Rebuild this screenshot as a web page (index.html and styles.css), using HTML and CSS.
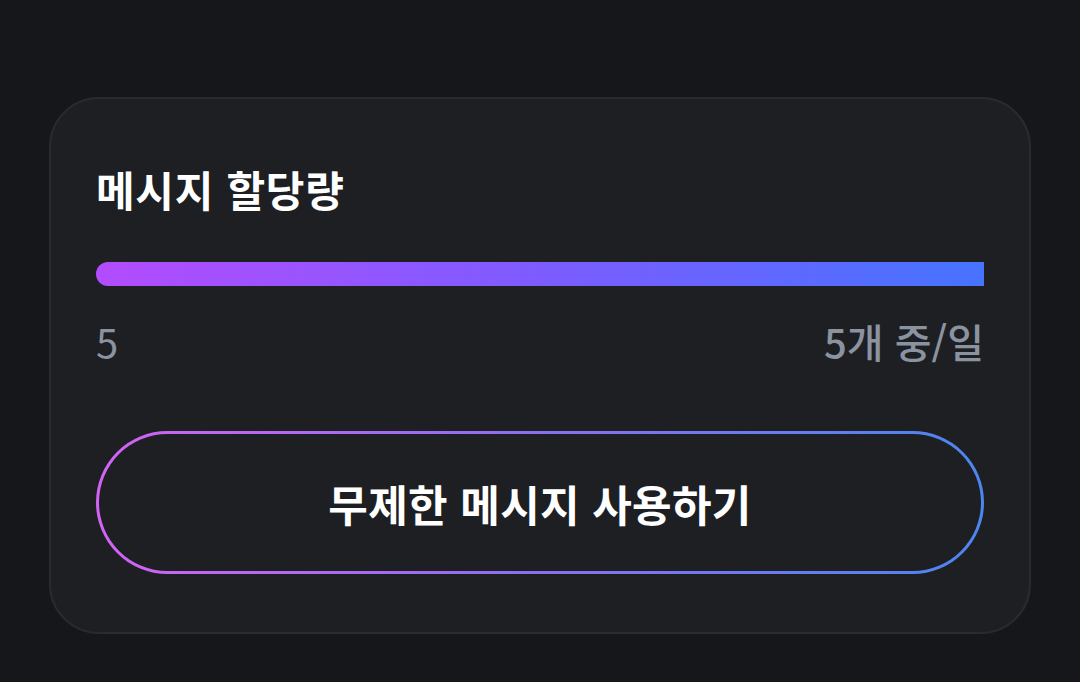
FILE: index.html
```html
<!DOCTYPE html>
<html lang="ko">
<head>
<meta charset="utf-8">
<link rel="stylesheet" href="styles.css">
</head>
<body>
<div class="page">
  <section class="card">
    <h2 class="title">메시지 할당량</h2>
    <div class="track"><div class="fill" style="width:100%"></div></div>
    <div class="labels">
      <span class="used">5</span>
      <span class="limit">5개 중/일</span>
    </div>
    <button class="cta"><span class="cta-inner">무제한 메시지 사용하기</span></button>
  </section>
</div>
</body>
</html>
```
FILE: styles.css
```css
html, body {
  margin: 0;
  padding: 0;
  background: #16171a;
  width: 1080px;
  height: 682px;
  overflow: hidden;
  font-family: "Noto Sans CJK KR", "Noto Sans", sans-serif;
}
.page {
  padding: 97px 49px 0 49px;
}
.card {
  box-sizing: border-box;
  width: 982px;
  height: 537px;
  background: #1e1f23;
  border: 2px solid #2a2b30;
  border-radius: 50px;
  padding: 60px 45px 0 45px;
  display: flex;
  flex-direction: column;
}
.title {
  margin: 0;
  color: #ffffff;
  font-size: 42px;
  font-weight: 700;
  line-height: 60px;
  letter-spacing: 0.7px;
}
.track {
  margin-top: 43px;
  height: 24px;
  border-radius: 12px 0 0 12px;
  overflow: hidden;
}
.fill {
  height: 100%;
  background: linear-gradient(90deg, #b34cff 0%, #7d5cff 50%, #4673ff 100%);
}
.labels {
  margin-top: 30px;
  display: flex;
  justify-content: space-between;
  color: #8b93a0;
  font-size: 40px;
  line-height: 50px;
}
.limit {
  font-weight: 500;
}
.cta {
  margin-top: 65px;
  height: 143px;
  padding: 3px;
  border: 0;
  border-radius: 72px;
  background: linear-gradient(90deg, #d363f6 0%, #8a6ff0 50%, #4c86f0 100%);
  font-family: inherit;
  cursor: pointer;
}
.cta-inner {
  box-sizing: border-box;
  display: flex;
  align-items: center;
  justify-content: center;
  height: 100%;
  border-radius: 70px;
  background: #1e1f23;
  color: #ffffff;
  font-size: 43px;
  font-weight: 700;
  letter-spacing: 0.3px;
}
```
